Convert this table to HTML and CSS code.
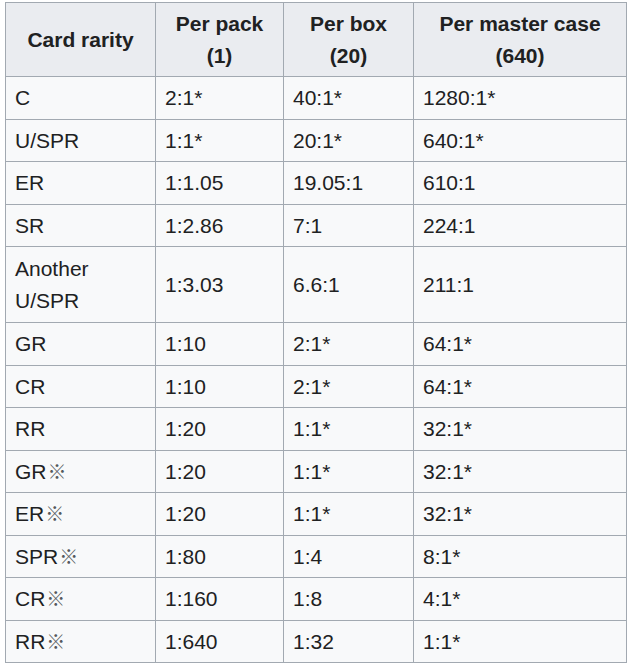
FILE: index.html
```html
<!DOCTYPE html>
<html lang="en">
<head>
<meta charset="utf-8">
<title>Card rarity</title>
<link rel="stylesheet" href="styles.css">
</head>
<body>
<table class="wikitable">
  <colgroup>
    <col class="c1">
    <col class="c2">
    <col class="c3">
    <col class="c4">
  </colgroup>
  <thead>
    <tr><th>Card rarity</th><th>Per pack<br>(1)</th><th>Per box<br>(20)</th><th>Per master case<br>(640)</th></tr>
  </thead>
  <tbody>
    <tr><td>C</td><td>2:1*</td><td>40:1*</td><td>1280:1*</td></tr>
    <tr><td>U/SPR</td><td>1:1*</td><td>20:1*</td><td>640:1*</td></tr>
    <tr><td>ER</td><td>1:1.05</td><td>19.05:1</td><td>610:1</td></tr>
    <tr><td>SR</td><td>1:2.86</td><td>7:1</td><td>224:1</td></tr>
    <tr class="multi"><td>Another<br>U/SPR</td><td>1:3.03</td><td>6.6:1</td><td>211:1</td></tr>
    <tr><td>GR</td><td>1:10</td><td>2:1*</td><td>64:1*</td></tr>
    <tr><td>CR</td><td>1:10</td><td>2:1*</td><td>64:1*</td></tr>
    <tr><td>RR</td><td>1:20</td><td>1:1*</td><td>32:1*</td></tr>
    <tr><td>GR<span class="kome">※</span></td><td>1:20</td><td>1:1*</td><td>32:1*</td></tr>
    <tr><td>ER<span class="kome">※</span></td><td>1:20</td><td>1:1*</td><td>32:1*</td></tr>
    <tr><td>SPR<span class="kome">※</span></td><td>1:80</td><td>1:4</td><td>8:1*</td></tr>
    <tr><td>CR<span class="kome">※</span></td><td>1:160</td><td>1:8</td><td>4:1*</td></tr>
    <tr><td>RR<span class="kome">※</span></td><td>1:640</td><td>1:32</td><td>1:1*</td></tr>
  </tbody>
</table>
</body>
</html>
```

FILE: styles.css
```css
html, body {
  margin: 0;
  padding: 0;
  background: #ffffff;
}

body {
  padding: 2px 0 0 5px;
  font-family: "Liberation Sans", Arial, sans-serif;
  font-size: 21px;
  line-height: 31.5px;
  color: #202122;
}

.wikitable {
  border-collapse: collapse;
  table-layout: fixed;
  width: 621px;
  background: #f8f9fa;
  border: 1px solid #a2a9b1;
  color: #202122;
}

.c1 { width: 150px; }
.c2 { width: 128px; }
.c3 { width: 130px; }
.c4 { width: 213px; }

.wikitable th,
.wikitable td {
  border: 1px solid #a2a9b1;
  padding: 5px 9px;
  text-align: left;
  vertical-align: middle;
}

.wikitable th {
  background: #eaecf0;
  font-weight: bold;
  text-align: center;
}

.wikitable .multi td {
  padding-top: 6px;
  padding-bottom: 6px;
}

.kome {
  font-family: "Noto Sans CJK JP", sans-serif;
  font-weight: 300;
  font-size: 19px;
  line-height: 0;
  color: #54595d;
  margin-left: 1px;
}
```
